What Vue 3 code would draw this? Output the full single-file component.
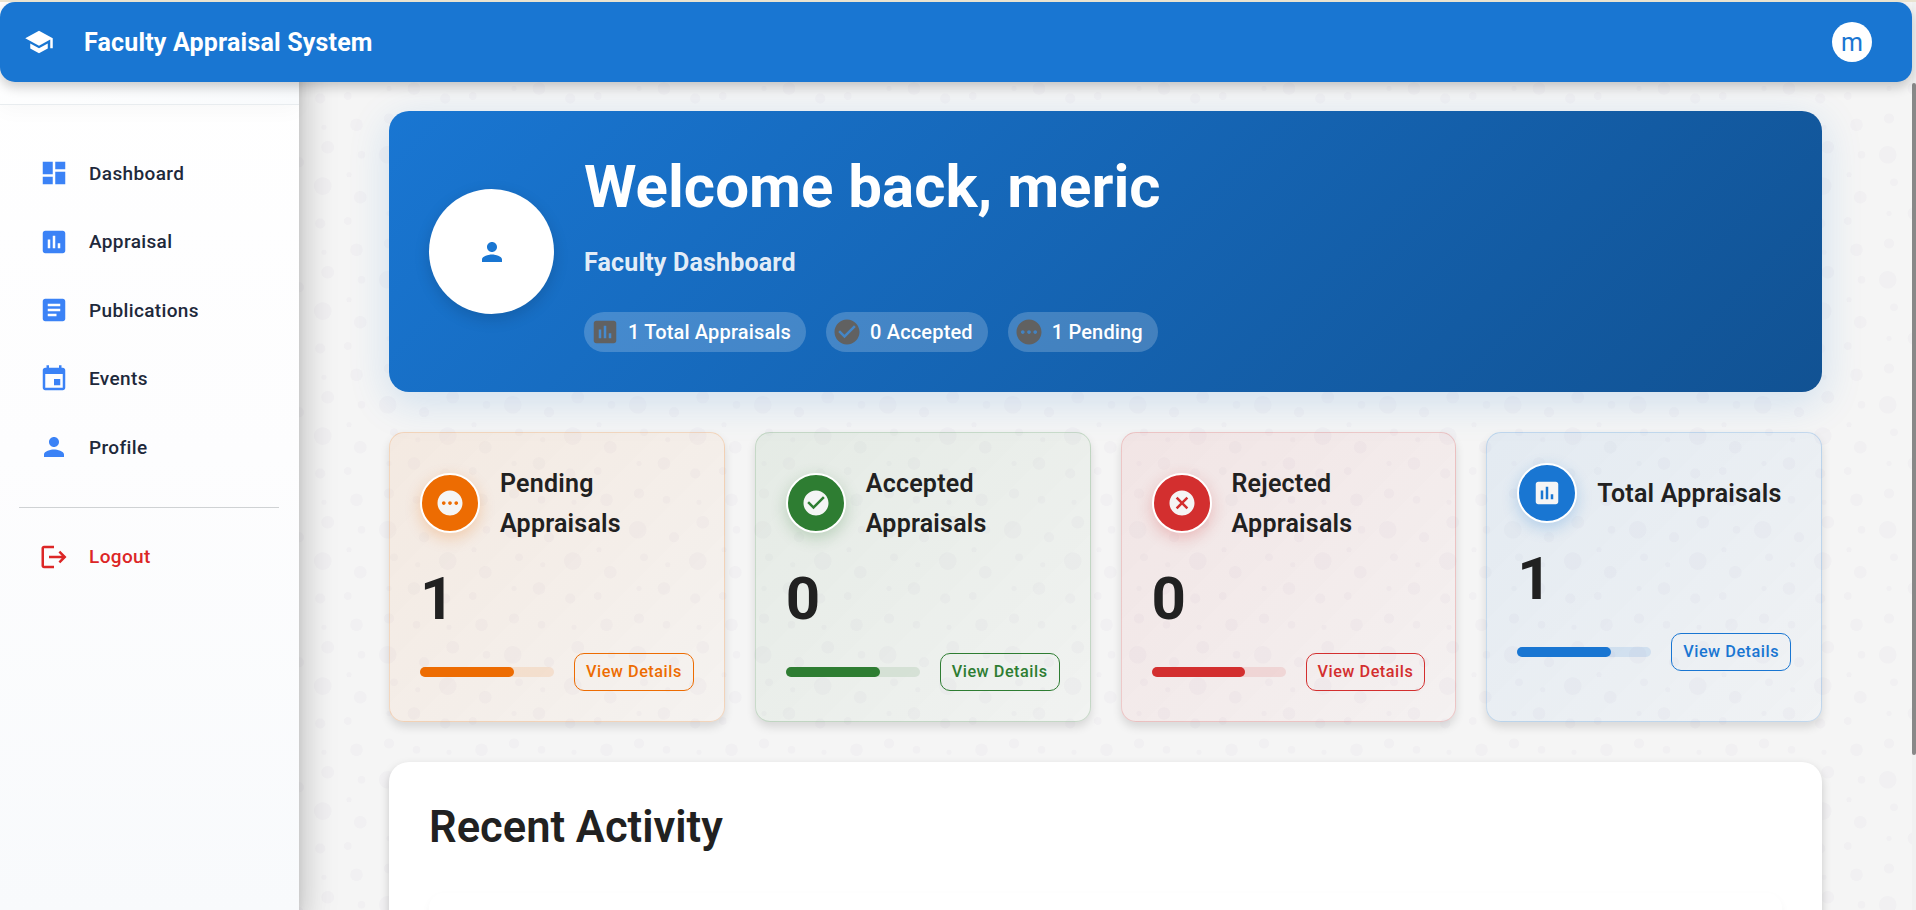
<script setup>
const icons = {
  school: 'M5 13.18v4L12 21l7-3.82v-4L12 17l-7-3.82zM12 3 1 9l11 6 9-4.91V17h2V9L12 3z',
  dashboard: 'M3 13h8V3H3v10zm0 8h8v-6H3v6zm10 0h8V11h-8v10zm0-18v6h8V3h-8z',
  chart: 'M19 3H5c-1.1 0-2 .9-2 2v14c0 1.1.9 2 2 2h14c1.1 0 2-.9 2-2V5c0-1.1-.9-2-2-2zM9 17H7v-7h2v7zm4 0h-2V7h2v10zm4 0h-2v-4h2v4z',
  article: 'M19 3H5c-1.1 0-2 .9-2 2v14c0 1.1.9 2 2 2h14c1.1 0 2-.9 2-2V5c0-1.1-.9-2-2-2zm-5 14H7v-2h7v2zm3-4H7v-2h10v2zm0-4H7V7h10v2z',
  event: 'M17 12h-5v5h5v-5zM16 1v2H8V1H6v2H5c-1.11 0-1.99.9-1.99 2L3 19c0 1.1.89 2 2 2h14c1.1 0 2-.9 2-2V5c0-1.1-.9-2-2-2h-1V1h-2zm3 18H5V8h14v11z',
  person: 'M12 12c2.21 0 4-1.79 4-4s-1.79-4-4-4-4 1.79-4 4 1.79 4 4 4zm0 2c-2.67 0-8 1.34-8 4v2h16v-2c0-2.66-5.33-4-8-4z',
  logout: 'm17 7-1.41 1.41L18.17 11H8v2h10.17l-2.58 2.58L17 17l5-5zM4 5h8V3H4c-1.1 0-2 .9-2 2v14c0 1.1.9 2 2 2h8v-2H4V5z',
  check: 'M12 2C6.48 2 2 6.48 2 12s4.48 10 10 10 10-4.48 10-10S17.52 2 12 2zm-2 15-5-5 1.41-1.41L10 14.17l7.59-7.59L19 8l-9 9z',
  pending: 'M12 2C6.48 2 2 6.48 2 12s4.48 10 10 10 10-4.48 10-10S17.52 2 12 2zM7 13.5c-.83 0-1.5-.67-1.5-1.5s.67-1.5 1.5-1.5 1.5.67 1.5 1.5-.67 1.5-1.5 1.5zm5 0c-.83 0-1.5-.67-1.5-1.5s.67-1.5 1.5-1.5 1.5.67 1.5 1.5-.67 1.5-1.5 1.5zm5 0c-.83 0-1.5-.67-1.5-1.5s.67-1.5 1.5-1.5 1.5.67 1.5 1.5-.67 1.5-1.5 1.5z',
  cancel: 'M12 2C6.47 2 2 6.47 2 12s4.47 10 10 10 10-4.47 10-10S17.53 2 12 2zm5 13.59L15.59 17 12 13.41 8.41 17 7 15.59 10.59 12 7 8.41 8.41 7 12 10.59 15.59 7 17 8.41 13.41 12 17 15.59z',
}
const nav = [
  { label: 'Dashboard', icon: 'dashboard' },
  { label: 'Appraisal', icon: 'chart' },
  { label: 'Publications', icon: 'article' },
  { label: 'Events', icon: 'event' },
  { label: 'Profile', icon: 'person' },
]
const chips = [
  { label: '1 Total Appraisals', icon: 'chart' },
  { label: '0 Accepted', icon: 'check' },
  { label: '1 Pending', icon: 'pending' },
]
const stats = [
  { title: 'Pending Appraisals', value: 1, icon: 'pending', tone: 'orange' },
  { title: 'Accepted Appraisals', value: 0, icon: 'check', tone: 'green' },
  { title: 'Rejected Appraisals', value: 0, icon: 'cancel', tone: 'red' },
  { title: 'Total Appraisals', value: 1, icon: 'chart', tone: 'blue' },
]
const bubbles = [
  [11, 11, 7], [59, 36, 7], [16, 33, 3], [79, 64, 3], [34, 87, 3], [90, 11, 3],
  [12, 82, 4], [40, 17, 4], [63, 5, 5], [57, 66, 4], [86, 87, 5], [32, 58, 5],
  [89, 45, 5], [80, 27, 2], [60, 89, 2], [35, 39, 2], [12, 58, 2],
]
</script>

<template>
  <div class="page">
    <header class="topbar">
      <svg class="icon logo" viewBox="0 0 24 24"><path :d="icons.school" /></svg>
      <span class="brand">Faculty Appraisal System</span>
      <span class="user">m</span>
    </header>

    <aside class="sidebar">
      <div class="side-head"></div>
      <nav class="menu">
        <a v-for="n in nav" :key="n.label" class="item">
          <svg class="icon" viewBox="0 0 24 24"><path :d="icons[n.icon]" /></svg>
          <span>{{ n.label }}</span>
        </a>
      </nav>
      <hr class="rule" />
      <a class="item logout">
        <svg class="icon" viewBox="0 0 24 24"><path :d="icons.logout" /></svg>
        <span>Logout</span>
      </a>
    </aside>

    <main class="main">
      <svg class="bubbles">
        <defs>
          <pattern id="bubbles" x="-300" y="16" width="125" height="125" patternUnits="userSpaceOnUse">
            <g transform="scale(1.25)">
              <circle v-for="(b, i) in bubbles" :key="i" :cx="b[0]" :cy="b[1]" :r="b[2]" />
            </g>
          </pattern>
        </defs>
        <rect width="100%" height="100%" fill="url(#bubbles)" />
      </svg>

      <section class="welcome">
        <div class="avatar">
          <svg class="icon" viewBox="0 0 24 24"><path :d="icons.person" /></svg>
        </div>
        <div>
          <h1>Welcome back, meric</h1>
          <p class="role">Faculty Dashboard</p>
          <div class="chips">
            <span v-for="c in chips" :key="c.label" class="chip">
              <svg class="icon" viewBox="0 0 24 24"><path :d="icons[c.icon]" /></svg>
              <span>{{ c.label }}</span>
            </span>
          </div>
        </div>
      </section>

      <section class="stats">
        <article v-for="s in stats" :key="s.title" class="stat" :class="s.tone">
          <div class="stat-head">
            <span class="badge">
              <svg class="icon" viewBox="0 0 24 24"><path :d="icons[s.icon]" /></svg>
            </span>
            <h2>{{ s.title }}</h2>
          </div>
          <div class="value">{{ s.value }}</div>
          <div class="stat-foot">
            <div class="track"><div class="fill"></div></div>
            <button type="button">View Details</button>
          </div>
        </article>
      </section>

      <section class="recent">
        <h2>Recent Activity</h2>
        <div class="activity"></div>
      </section>
    </main>

    <div class="scrollbar"><div class="thumb"></div></div>
  </div>
</template>

<style>
html,
body {
  overflow: hidden;
}
</style>

<style scoped>
* {
  box-sizing: border-box;
}
.page {
  position: relative;
  display: grid;
  grid-template-columns: 299px 1613px 4px;
  grid-template-rows: 82px 828px;
  width: 1916px;
  height: 910px;
  overflow: hidden;
  font-family: Roboto, sans-serif;
  color: #212121;
  background: #f5f5f5;
}
.page::before {
  content: '';
  position: absolute;
  inset: 0 0 auto;
  z-index: 6;
  height: 2px;
  background: #e9e3d0;
}
.icon {
  display: block;
  width: 30px;
  height: 30px;
  fill: currentColor;
  flex: none;
}
.topbar {
  grid-column: 1 / 3;
  grid-row: 1;
  z-index: 5;
  display: flex;
  align-items: center;
  height: 80px;
  margin-top: 2px;
  padding: 0 40px 0 24px;
  border-radius: 15px;
  background: #1976d2;
  color: #fff;
  box-shadow: 0 5px 12px rgba(0, 0, 0, 0.2);
}
.brand {
  margin-left: 30px;
  padding-top: 1px;
  font-size: 25px;
  font-weight: 700;
  line-height: 40px;
  letter-spacing: 0.18px;
}
.user {
  width: 40px;
  height: 40px;
  margin-left: auto;
  border-radius: 50%;
  background: #fff;
  color: #1976d2;
  font-size: 25px;
  line-height: 42px;
  text-align: center;
}
.sidebar {
  grid-column: 1;
  grid-row: 1 / 3;
  z-index: 3;
  padding-top: 2px;
  background: linear-gradient(180deg, #fff 0%, #fdfdfe 50%, #f8fafc 100%);
  box-shadow: 0 10px 12px -6px rgba(0, 0, 0, 0.2), 0 20px 30px 2px rgba(0, 0, 0, 0.14), 0 8px 36px 6px rgba(0, 0, 0, 0.1);
}
.side-head {
  height: 103px;
  border-bottom: 1px solid #e8ecef;
  background: linear-gradient(135deg, #fff, #f8fafc);
  box-shadow: 0 5px 20px rgba(0, 0, 0, 0.03);
}
.menu {
  display: flex;
  flex-direction: column;
  padding-top: 34px;
}
.item {
  display: flex;
  align-items: center;
  gap: 20px;
  height: 68.5px;
  padding-left: 39px;
  font-size: 19px;
  font-weight: 490;
  letter-spacing: 0.37px;
  color: #1e293b;
}
.item .icon {
  color: #3b82f6;
}
.rule {
  height: 1px;
  margin: 25px 20px 15px 19px;
  border: 0;
  background: #cfd2d4;
}
.logout,
.logout .icon {
  color: #dc2626;
}
.main {
  grid-column: 2;
  grid-row: 1 / 3;
  position: relative;
  display: flex;
  flex-direction: column;
  gap: 40px;
  padding: 111px 90px 0;
}
.main > section {
  position: relative;
  flex: none;
}
.bubbles {
  position: absolute;
  inset: 0;
  width: 100%;
  height: 100%;
}
.bubbles circle {
  fill: #9c92ac;
  fill-opacity: 0.05;
}
.welcome {
  display: flex;
  align-items: center;
  gap: 30px;
  height: 281px;
  padding: 0 40px;
  border-radius: 20px;
  background: linear-gradient(135deg, #1976d2 0%, #115293 100%);
  color: #fff;
  box-shadow: 0 10px 40px rgba(25, 118, 210, 0.17);
}
.avatar {
  display: flex;
  align-items: center;
  justify-content: center;
  width: 125px;
  height: 125px;
  border-radius: 50%;
  background: #fff;
  color: #1976d2;
  box-shadow: 0 5px 15px rgba(0, 0, 0, 0.15);
}
h1,
h2,
p {
  margin: 0;
}
h1 {
  font-size: 60px;
  font-weight: 700;
  line-height: 71px;
}
.role {
  margin: 21px 0 29px;
  font-size: 25px;
  font-weight: 700;
  line-height: 40px;
  letter-spacing: 0.18px;
  color: rgba(255, 255, 255, 0.9);
}
.chips {
  display: flex;
  gap: 20px;
}
.chip {
  display: flex;
  align-items: center;
  gap: 8px;
  height: 40px;
  padding: 0 15px 0 6px;
  border-radius: 20px;
  background: rgba(255, 255, 255, 0.2);
  font-size: 20px;
  font-weight: 500;
  letter-spacing: 0.16px;
}
.chip .icon {
  color: #616161;
}
.stats {
  display: grid;
  grid-template-columns: repeat(4, 1fr);
  gap: 30px;
  height: 290px;
}
.stat {
  --tone: 25, 118, 210;
  padding: 30px;
  border: 1px solid rgba(var(--tone), 0.2);
  border-radius: 15px;
  background: linear-gradient(135deg, rgba(var(--tone), 0.08) 0%, rgba(var(--tone), 0.02) 100%);
  box-shadow: 0 5px 10px rgba(0, 0, 0, 0.12);
}
.orange {
  --tone: 237, 108, 2;
}
.green {
  --tone: 46, 125, 50;
}
.red {
  --tone: 211, 47, 47;
}
.stat-head {
  display: flex;
  align-items: center;
  gap: 20px;
}
.badge {
  display: flex;
  flex: none;
  align-items: center;
  justify-content: center;
  width: 60px;
  height: 60px;
  border: 2px solid #fff;
  border-radius: 50%;
  background: rgb(var(--tone));
  color: #f5f5f5;
  box-shadow: 0 5px 15px rgba(var(--tone), 0.25);
}
.stat h2 {
  padding-top: 1px;
  margin-bottom: -1px;
  font-size: 25px;
  font-weight: 600;
  line-height: 40px;
  letter-spacing: 0.22px;
}
.value {
  margin: 20px 0 19px;
  font-size: 60px;
  font-weight: 700;
  line-height: 71px;
}
.stat-foot {
  display: flex;
  align-items: center;
  gap: 20px;
}
.track {
  flex: 1;
  height: 10px;
  border-radius: 5px;
  background: rgba(var(--tone), 0.12);
}
.fill {
  width: 70%;
  height: 100%;
  border-radius: 5px;
  background: rgb(var(--tone));
}
button {
  width: 119.75px;
  height: 38px;
  padding: 0 0 1px;
  border: 1px solid rgb(var(--tone));
  border-radius: 10px;
  background: transparent;
  color: rgb(var(--tone));
  font: 490 16.25px Roboto, sans-serif;
  letter-spacing: 0.52px;
  white-space: nowrap;
}
.recent {
  height: 400px;
  padding: 40px;
  border-radius: 20px;
  background: #fff;
  box-shadow: 0 4px 10px rgba(0, 0, 0, 0.18);
}
.recent h2 {
  font-size: 43.5px;
  font-weight: 600;
  line-height: 52px;
}
.activity {
  height: 200px;
  margin-top: 39px;
  border-radius: 15px;
  box-shadow: 0 4px 10px rgba(0, 0, 0, 0.04);
}
.scrollbar {
  grid-column: 3;
  grid-row: 1 / 3;
  padding-top: 83px;
  background: #f1f1f1;
}
.thumb {
  height: 672px;
  border-radius: 2px;
  background: #888;
}
</style>
